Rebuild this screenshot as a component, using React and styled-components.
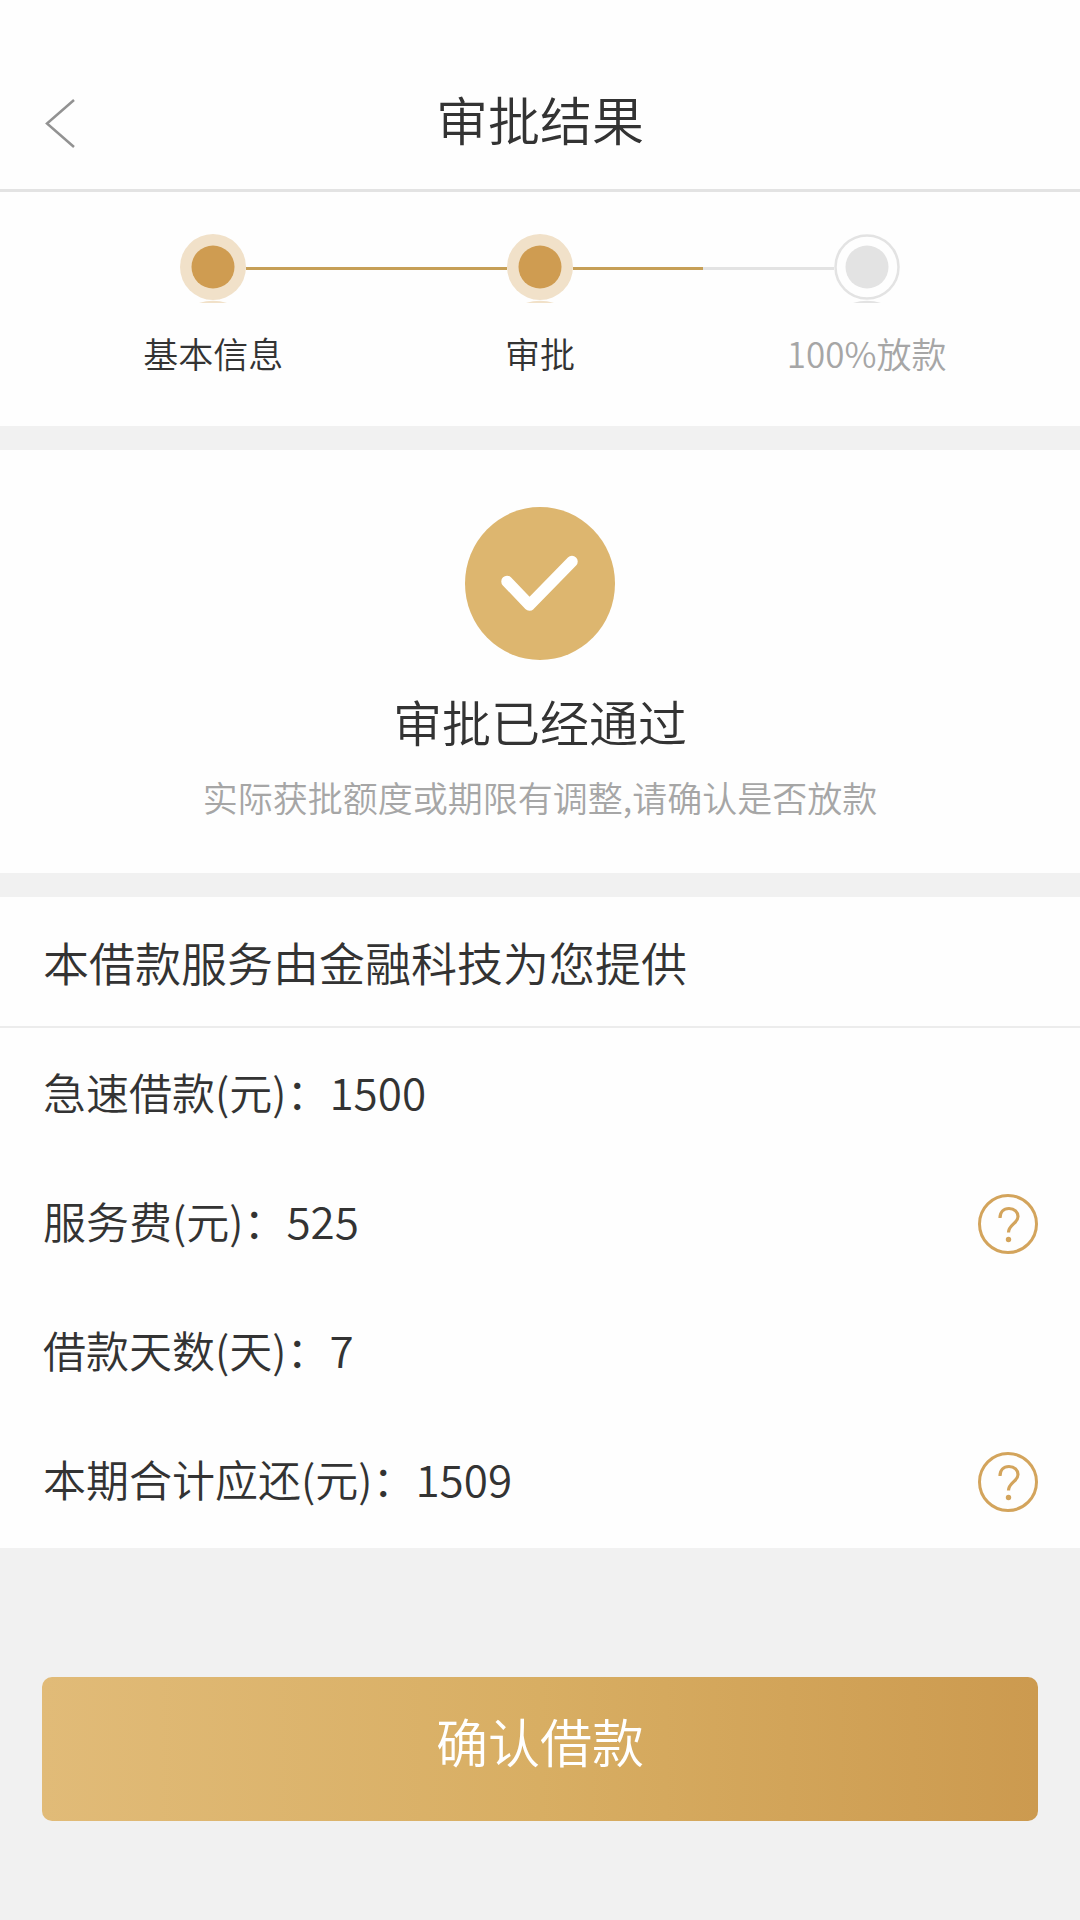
import styled, { createGlobalStyle } from "styled-components";

const Colors = {
	Text: "#333333",
	Muted: "#a6a6a6",
	Gold: "#cf9c51",
	GoldLight: "#ddb66f",
	GoldPale: "#f1e1c9",
	Line: "#c69f56",
	Grey: "#e3e3e3",
	Page: "#f1f1f1",
	White: "#fefefe",
};

const GlobalStyle = createGlobalStyle`
	* {
		box-sizing: border-box;
		margin: 0;
		padding: 0;
	}
	body {
		background-color: ${Colors.Page};
		color: ${Colors.Text};
		font-family: "Noto Sans CJK SC", sans-serif;
		font-weight: 350;
	}
	button {
		font: inherit;
		border: none;
		background: none;
		cursor: pointer;
	}
	svg {
		display: block;
	}
`;

const Header = styled.header`
	display: grid;
	grid-template-columns: 1fr auto 1fr;
	align-items: center;
	padding: 49px 42px 0;
	height: 192px;
	background-color: ${Colors.White};
	border-bottom: 3px solid ${Colors.Grey};
`;

const BackButton = styled.button`
	justify-self: start;
	padding-top: 8px;
`;

const Title = styled.h1`
	font-size: 52px;
	line-height: 64px;
	font-weight: inherit;
`;

const Main = styled.main`
	display: flex;
	flex-direction: column;
	gap: 24px;
`;

const Panel = styled.section`
	background-color: ${Colors.White};
`;

const Steps = styled.ol`
	display: grid;
	grid-template-columns: repeat(3, 1fr);
	padding: 42px 50px 49px;
	list-style: none;
	background-color: ${Colors.White};
`;

const Step = styled.li`
	display: flex;
	flex-direction: column;
	gap: 26px;
	font-size: 35px;
	line-height: 48px;
	text-align: center;
	color: ${({ $pending }) => ($pending ? Colors.Muted : Colors.Text)};
`;

const Track = styled.div`
	display: flex;
	align-items: center;
`;

const Connector = styled.span`
	flex: 1;
	height: 3px;
	background-color: ${({ $color }) => $color || "transparent"};
`;

const Result = styled(Panel)`
	display: flex;
	flex-direction: column;
	align-items: center;
	padding: 57px 42px 52px;
	text-align: center;
`;

const ResultTitle = styled.h2`
	margin-top: 29px;
	font-size: 49px;
	line-height: 64px;
	font-weight: inherit;
`;

const ResultNote = styled.p`
	margin-top: 20px;
	font-size: 35px;
	line-height: 48px;
	color: ${Colors.Muted};
`;

const Provider = styled.h2`
	padding: 32px 43px 33px;
	font-size: 46px;
	line-height: 64px;
	font-weight: inherit;
	border-bottom: 2px solid #ececec;
`;

const Details = styled.dl`
	padding-bottom: 4px;
`;

const Row = styled.div`
	display: flex;
	align-items: center;
	min-height: 129px;
	padding: 0 42px 0 43px;
	font-size: 43px;
	line-height: 64px;
`;

const Term = styled.dt`
	padding-bottom: 4px;
`;

const Value = styled.dd`
	padding-bottom: 4px;
	font-size: 44px;
`;

const Help = styled.dd`
	display: flex;
	margin-left: auto;
	padding-top: 4px;
`;

const Footer = styled.footer`
	padding: 129px 42px 99px;
`;

const ConfirmButton = styled.button`
	display: block;
	width: 100%;
	padding: 32px 0 48px;
	border-radius: 10px;
	font-size: 52px;
	line-height: 64px;
	color: white;
	background: linear-gradient(to right, #e1bb78, #d8ae63 50%, #cc9a4f);
`;

const steps = [
	{ label: "基本信息", after: Colors.Line },
	{ label: "审批", before: Colors.Line, after: Colors.Line },
	{ label: "100%放款", before: Colors.Grey, pending: true },
];

const details = [
	{ label: "急速借款(元)：", value: "1500" },
	{ label: "服务费(元)：", value: "525", help: "服务费说明" },
	{ label: "借款天数(天)：", value: "7" },
	{ label: "本期合计应还(元)：", value: "1509", help: "应还金额说明" },
];

function StepDot({ pending }) {
	return (
		<svg width="66" height="69" viewBox="0 0 66 69" aria-hidden="true">
			{pending ? (
				<circle cx="33" cy="33" r="31.5" fill="none" stroke={Colors.Grey} strokeWidth="2.5" />
			) : (
				<circle cx="33" cy="33" r="33" fill={Colors.GoldPale} />
			)}
			<circle cx="33" cy="33" r="21.5" fill={pending ? Colors.Grey : Colors.Gold} />
			<path
				d="M19 69Q33 64.500 47 69Z"
				fill={pending ? Colors.Grey : Colors.GoldPale}
			/>
		</svg>
	);
}

function HelpIcon() {
	return (
		<svg width="60" height="60" viewBox="0 0 60 60" fill="none" stroke="#d3a45c" aria-hidden="true">
			<circle cx="30" cy="30" r="28.5" strokeWidth="3" />
			<path
				d="M22 24C22 18 25.500 14.500 31 14.500C36.500 14.500 40 18 40 22.500C40 29.500 30.500 30.500 30.500 38.500"
				strokeWidth="3.200"
			/>
			<circle cx="30.500" cy="45.500" r="2.700" fill="#d3a45c" stroke="none" />
		</svg>
	);
}

export default function App() {
	return (
		<>
			<GlobalStyle />
			<Header>
				<BackButton type="button" aria-label="返回">
					<svg width="36" height="52" viewBox="0 0 36 52" fill="none" aria-hidden="true">
						<path d="M32 3L5 26.500L32 50" stroke="#929292" strokeWidth="2.500" />
					</svg>
				</BackButton>
				<Title>审批结果</Title>
			</Header>
			<Main>
				<Steps>
					{steps.map((step) => (
						<Step key={step.label} $pending={step.pending}>
							<Track>
								<Connector $color={step.before} />
								<StepDot pending={step.pending} />
								<Connector $color={step.after} />
							</Track>
							<span>{step.label}</span>
						</Step>
					))}
				</Steps>
				<Result>
					<svg width="150" height="153" viewBox="0 0 150 153" aria-hidden="true">
						<ellipse cx="75" cy="76.5" rx="75" ry="76.5" fill={Colors.GoldLight} />
						<path
							d="M42 74.500L64.500 98L107 54.500"
							fill="none"
							stroke="white"
							strokeWidth="11.500"
							strokeLinecap="round"
							strokeLinejoin="round"
						/>
					</svg>
					<ResultTitle>审批已经通过</ResultTitle>
					<ResultNote>实际获批额度或期限有调整,请确认是否放款</ResultNote>
				</Result>
				<Panel>
					<Provider>本借款服务由金融科技为您提供</Provider>
					<Details>
						{details.map((item) => (
							<Row key={item.label}>
								<Term>{item.label}</Term>
								<Value>{item.value}</Value>
								{item.help && (
									<Help>
										<button type="button" aria-label={item.help}>
											<HelpIcon />
										</button>
									</Help>
								)}
							</Row>
						))}
					</Details>
				</Panel>
			</Main>
			<Footer>
				<ConfirmButton type="button">确认借款</ConfirmButton>
			</Footer>
		</>
	);
}
